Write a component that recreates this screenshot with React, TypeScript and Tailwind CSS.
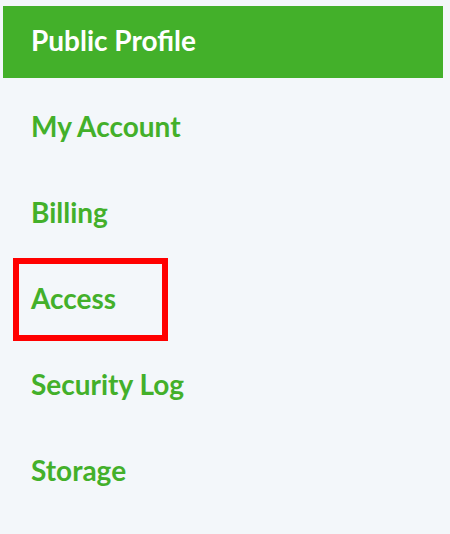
const items = ["Public Profile", "My Account", "Billing", "Access", "Security Log", "Storage"];

export default function App() {
  return (
    <div className="min-h-screen bg-[#f3f7fa] py-1.5 pr-[7px] pl-[3px] font-['Lato',sans-serif] text-[28px] leading-10 font-bold">
      <nav aria-label="Account settings">
        <ul className="flex flex-col gap-3.5">
          {items.map((item, i) => (
            <li key={item} className="relative">
              <a
                href="#"
                aria-current={i === 0 ? "page" : undefined}
                className={
                  i === 0
                    ? "block bg-[#43b02a] px-7 pt-3.5 pb-[18px] text-white"
                    : "block px-7 pt-3.5 pb-[18px] text-[#43b02a]"
                }
              >
                {item}
              </a>
              {item === "Access" && (
                <span className="pointer-events-none absolute -top-1.5 left-2.5 h-[83px] w-[155px] border-[6px] border-[#ff0000]" />
              )}
            </li>
          ))}
        </ul>
      </nav>
    </div>
  );
}
